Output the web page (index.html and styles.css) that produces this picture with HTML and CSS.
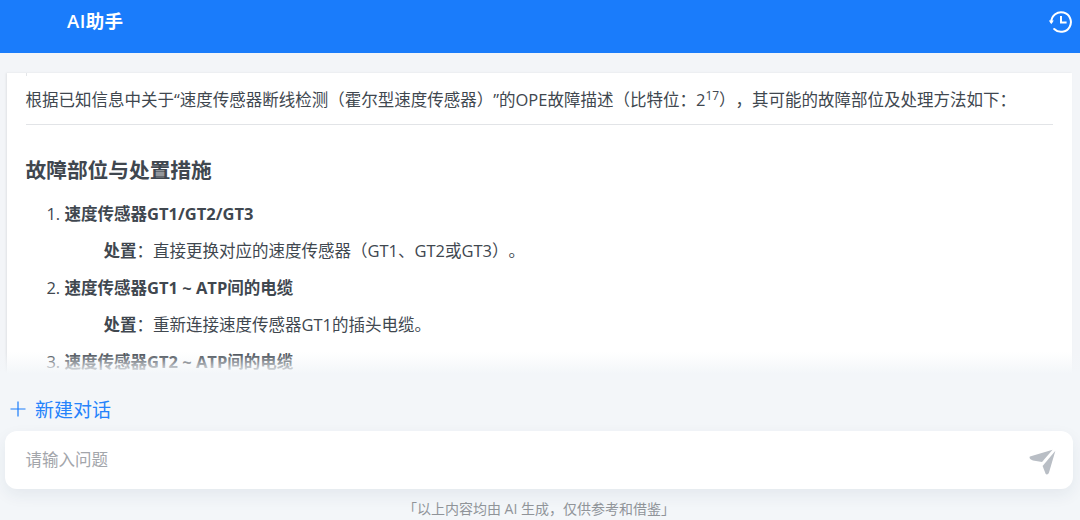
FILE: index.html
```html
<!DOCTYPE html>
<html lang="zh-CN">
<head>
<meta charset="utf-8">
<title>AI助手</title>
<link rel="stylesheet" href="styles.css">
</head>
<body>
<div class="app">
  <header class="topbar">
    <h1 class="title">AI助手</h1>
    <svg class="history" viewBox="0 0 24 24" width="24" height="24" fill="none" stroke="#fff" stroke-width="2">
      <path d="M2.3 12a9.8 9.8 0 1 1 2.9 7" stroke-linecap="round"/>
      <path d="M-.2 10.4h5L2.3 14.2z" fill="#fff" stroke="none"/>
      <path d="M12 7v5.6h4.6" stroke-linecap="square"/>
    </svg>
  </header>
  <main class="chat">
    <article class="card">
      <div class="notch"></div>
      <p class="intro">根据已知信息中关于“速度传感器断线检测（霍尔型速度传感器）”的OPE故障描述（比特位：2<sup>17</sup>），其可能的故障部位及处理方法如下：</p>
      <hr class="rule">
      <h2 class="heading">故障部位与处置措施</h2>
      <ol class="faults">
        <li><strong>速度传感器GT1/GT2/GT3</strong><p class="fix"><strong>处置</strong>：直接更换对应的速度传感器（GT1、GT2或GT3）。</p></li>
        <li><strong>速度传感器GT1 ~ ATP间的电缆</strong><p class="fix"><strong>处置</strong>：重新连接速度传感器GT1的插头电缆。</p></li>
        <li><strong>速度传感器GT2 ~ ATP间的电缆</strong></li>
      </ol>
    </article>
    <div class="fade"></div>
  </main>
  <footer class="bottom">
    <button class="new-chat" type="button">
      <svg viewBox="0 0 16 16" width="16" height="16" stroke="#1a7cfb" stroke-width="1.2" fill="none"><path d="M8 .5v15M.5 8h15"/></svg>
      <span>新建对话</span>
    </button>
    <div class="input-box">
      <span class="placeholder">请输入问题</span>
      <svg class="send" viewBox="0 0 27 26" width="27" height="26" fill="#b9bec5">
        <path d="M1 7.4 23.6.8 13 13 4 11.4C.6 10.6 0 8 1 7.4z"/>
        <path d="M26.4 1.8 20 23.6c-.6 2-2.6 2.6-3.4 1.2L13.6 17z"/>
      </svg>
    </div>
    <p class="disclaimer">「以上内容均由 AI 生成，仅供参考和借鉴」</p>
  </footer>
</div>
</body>
</html>
```
FILE: styles.css
```css
* { box-sizing: border-box; }
html, body { margin: 0; height: 100%; }
body {
  font-family: "Open Sans", "Noto Sans CJK SC", sans-serif;
  background: #f3f6f9;
  color: #40474f;
  overflow: hidden;
  text-spacing-trim: space-all;
}
.app { width: 1080px; height: 520px; display: flex; flex-direction: column; overflow: hidden; }
.topbar {
  height: 53px;
  flex: none;
  background: #1a7cfb;
  display: flex;
  align-items: flex-start;
  justify-content: space-between;
  padding: 10px 7px 0 67px;
}
.title { margin: -2px 0 0; font-size: 18.5px; line-height: 25px; font-weight: 600; letter-spacing: .4px; color: #fff; }
.chat { height: 321px; flex: none; padding: 20px 8px 0 7px; position: relative; overflow: hidden; background: #f3f5f8; }
.card {
  background: #fff;
  height: 320px;
  padding: 0 19px;
  box-shadow: -1px 0 2px rgba(0,0,0,.08);
  overflow: hidden;
}
.notch { width: 1px; height: 3px; background: #e4e6e9; }
.intro { margin: 0 0 0 -0.5px; padding-top: 9px; font-size: 16.5px; line-height: 30px; height: 48px; white-space: nowrap; }
.intro sup { font-size: 12px; line-height: 0; }
.rule { margin: 0; border: 0; border-top: 1px solid #e2e4e7; }
.heading { margin: 0 0 0 -0.5px; padding-top: 29px; font-size: 20.7px; line-height: 33px; font-weight: 700; }
.faults { margin: 0 0 0 -0.5px; padding: 13px 0 0 39px; font-size: 16.5px; line-height: 27px; }
.faults li { margin-bottom: 10px; }
.faults strong { font-weight: 700; }
.fix { margin: 10px 0 0 39px; }
.fade {
  position: absolute; left: 0; right: 0; bottom: 0; height: 22px;
  background: linear-gradient(rgba(243,246,249,0), #f3f6f9);
}
.bottom { flex: 1; display: flex; flex-direction: column; padding: 0 7px 0 5px; }
.new-chat {
  height: 57px; flex: none;
  display: flex; align-items: center; gap: 9px;
  padding: 13px 0 0 5px;
  border: 0; background: none;
  font: inherit; font-size: 19px; color: #2583fb;
}
.input-box {
  height: 58px; flex: none;
  background: #fff;
  border-radius: 12px;
  box-shadow: 0 6px 16px rgba(30,50,80,.07);
  display: flex; align-items: center; justify-content: space-between;
  padding: 0 17px 0 21px;
}
.placeholder { font-size: 16.5px; line-height: 24px; margin: 0 0 0 -0.5px; color: #a3a6ab; }
.send { display: block; margin-top: 4px; }
.disclaimer { margin: 0; padding-top: 11px; text-align: center; font-size: 14px; line-height: 18px; color: #909499; }
```
